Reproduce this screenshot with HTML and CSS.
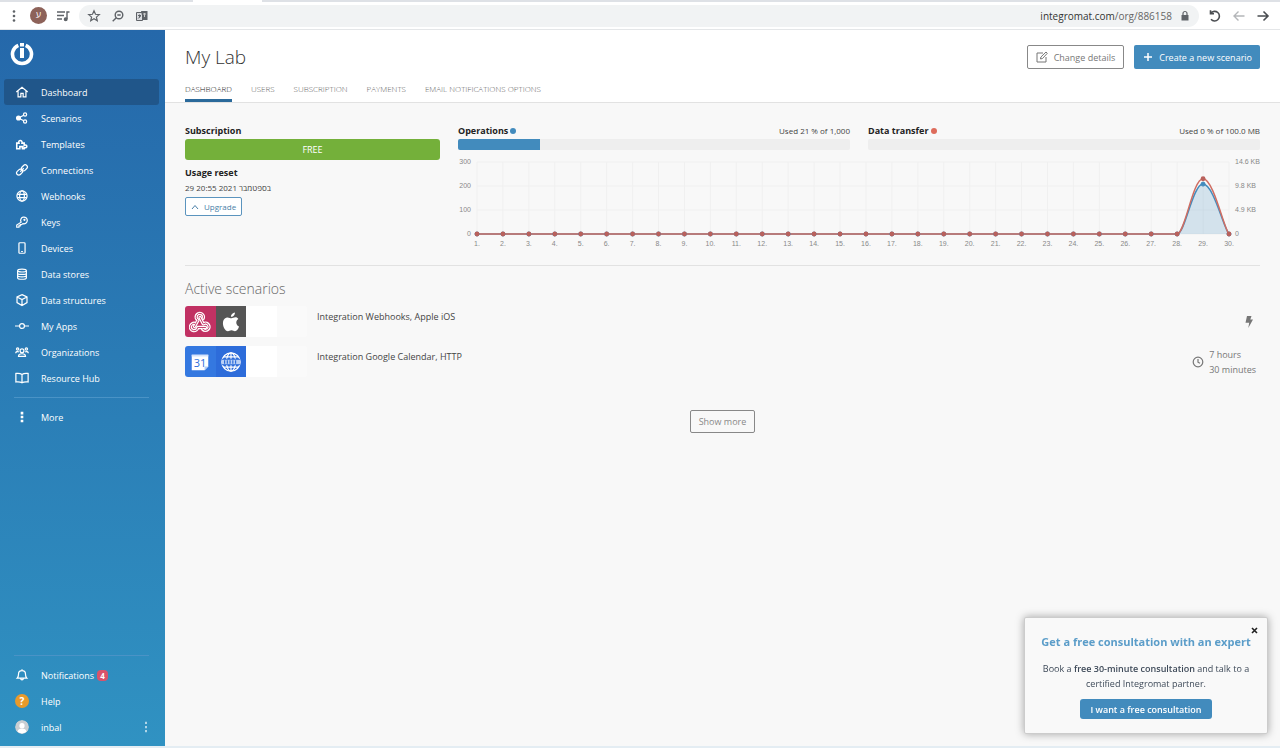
FILE: index.html
```
<!DOCTYPE html>
<html lang="en">
<head>
    <meta charset="UTF-8">
    <meta name="viewport" content="width=device-width, initial-scale=1.0">
    <title>My Lab</title>
    <link rel="stylesheet" href="styles.css">
</head>
<body>
    <div class="tabstrip"></div>
    <div class="toolbar">
        <button class="tool" aria-label="Menu"><svg width="16" height="16" viewBox="0 0 16 16" fill="#5f6368"><circle cx="8" cy="3.5" r="1.3"/><circle cx="8" cy="8" r="1.3"/><circle cx="8" cy="12.5" r="1.3"/></svg></button>
        <span class="profile">ע</span>
        <button class="tool" aria-label="Media"><svg width="16" height="16" viewBox="0 0 16 16" fill="none" stroke="#5f6368" stroke-width="1.4"><path d="M2 4h8M2 7.500h7M2 11h5M12 11V4h2.500"/><circle cx="10.700" cy="11.300" r="1.300" fill="#5f6368"/></svg></button>
        <div class="address">
            <button class="tool" aria-label="Bookmark"><svg width="16" height="16" viewBox="0 0 16 16" fill="none" stroke="#5f6368" stroke-width="1.2"><path d="M8 2.800l1.500 3.500 3.800.3-2.900 2.500.9 3.700L8 10.800l-3.300 2 .9-3.700-2.900-2.500 3.800-.3z"/></svg></button>
            <button class="tool" aria-label="Zoom"><svg width="16" height="16" viewBox="0 0 16 16" fill="none" stroke="#5f6368" stroke-width="1.4"><circle cx="9" cy="7" r="3.800"/><path d="M6.300 9.700L2.700 13.200M7.300 7h3.400"/></svg></button>
            <button class="tool" aria-label="Translate"><svg width="16" height="16" viewBox="0 0 16 16"><path d="M2.500 4.500h6v8h-6z" fill="#dadce0" stroke="#5f6368"/><path d="M7 3h6.500v9H9z" fill="#5f6368"/><path d="M4 7.500h3M5.500 6.500v3M4.200 10.500l2.500-2.500" stroke="#5f6368" fill="none"/><path d="M9 6h3M10.500 5v4" stroke="#ccc" fill="none"/></svg></button>
            <span class="url">integromat.com<span>/org/886158</span></span>
            <svg width="10" height="12" viewBox="0 0 10 12"><path d="M1.500 5h7v5.500h-7z" fill="#5f6368"/><path d="M3 5V3.500a2 2 0 0 1 4 0V5" fill="none" stroke="#5f6368" stroke-width="1.2"/></svg>
        </div>
        <button class="tool" aria-label="Reload"><svg width="16" height="16" viewBox="0 0 16 16" fill="none" stroke="#4a4d51" stroke-width="1.6"><path d="M3.800 5.200A4.800 4.800 0 1 1 4 11.300M3.500 2.200v3.500H7"/></svg></button>
        <button class="tool" aria-label="Forward"><svg width="16" height="16" viewBox="0 0 16 16" fill="none" stroke="#b4b6b9" stroke-width="1.400"><path d="M13.500 8H3M7.500 3.500L3 8l4.500 4.500"/></svg></button>
        <button class="tool" aria-label="Back"><svg width="16" height="16" viewBox="0 0 16 16" fill="none" stroke="#4a4d51" stroke-width="1.600"><path d="M2.500 8H13M8.500 3.500L13 8l-4.500 4.500"/></svg></button>
    </div>

    <div class="app">
        <nav class="sidebar">
            <a class="logo" href="#" aria-label="Home"><svg width="24" height="24" viewBox="0 0 24 24"><path d="M8.300 3.300A9.500 9.500 0 1 0 15.700 3.300" fill="none" stroke="#fff" stroke-width="3.600"/><path d="M10 1h4v3.500h-4zM10 6h4v10h-4z" fill="#fff"/></svg></a>
            <ul>
                <li><a class="active" href="#"><svg viewBox="0 0 16 16"><path d="M1.500 8L8 2.500 14.500 8M3.500 7v6.500h3.200V9.500h2.600v4h3.200V7"/></svg>Dashboard</a></li>
                <li><a href="#"><svg viewBox="0 0 16 16"><circle cx="4" cy="8" r="2.200" fill="#fff"/><circle cx="11.500" cy="4" r="1.800"/><circle cx="11.500" cy="12" r="1.800"/><path d="M5.500 7.200L10 4.800M5.500 8.800l4.500 2.400"/></svg>Scenarios</a></li>
                <li><a href="#"><svg viewBox="0 0 16 16"><path d="M2 13.500V7h2.500c-1.500-4 4.500-4 3.500 0h2.500v2.500c4-1.500 4 4 0 2.500v1.500H8.500v-2.500h-3v2.500z" stroke-width="1.800"/></svg>Templates</a></li>
                <li><a href="#"><svg viewBox="0 0 16 16"><rect x="7" y="3" width="7.500" height="5" rx="2.500" transform="rotate(-45 10.700 5.500)"/><rect x="1.500" y="8" width="7.500" height="5" rx="2.500" transform="rotate(-45 5.200 10.500)"/><path d="M6 10l4-4"/></svg>Connections</a></li>
                <li><a href="#"><svg viewBox="0 0 16 16"><circle cx="8" cy="8" r="5.800"/><ellipse cx="8" cy="8" rx="2.700" ry="5.800"/><path d="M2.500 6.200h11M2.500 9.800h11"/></svg>Webhooks</a></li>
                <li><a href="#"><svg viewBox="0 0 16 16"><path d="M7 8.200a3.800 3.800 0 1 1 2 1.600L7.500 11H6v1.500H4.500V14H2v-2.600z"/><circle cx="10.800" cy="5.500" r=".6"/></svg>Keys</a></li>
                <li><a href="#"><svg viewBox="0 0 16 16"><rect x="4.500" y="2" width="7" height="12" rx="1"/><path d="M7 12h2"/></svg>Devices</a></li>
                <li><a href="#"><svg viewBox="0 0 16 16"><path d="M3 4.200v8c0 2.400 10 2.400 10 0v-8M3 7c0 2 10 2 10 0M3 9.700c0 2 10 2 10 0"/><ellipse cx="8" cy="4" rx="5" ry="1.700"/></svg>Data stores</a></li>
                <li><a href="#"><svg viewBox="0 0 16 16"><path d="M8 1.800l5.700 2.700v6.500L8 14.200 2.300 11V4.500zM2.300 4.500L8 7.500l5.700-3M8 7.500v6.700"/></svg>Data structures</a></li>
                <li><a href="#"><svg viewBox="0 0 16 16"><circle cx="8" cy="8" r="2.800"/><path d="M0 8h5M11 8h5"/></svg>My Apps</a></li>
                <li><a href="#"><svg viewBox="0 0 16 16"><circle cx="8" cy="6.500" r="2.200"/><circle cx="3" cy="4.500" r="1.300"/><circle cx="13" cy="4.500" r="1.300"/><path d="M4 13c0-4 8-4 8 0zM.8 9.500C.8 7.500 3 7 4.500 8M15.200 9.500c0-2-2.200-2.500-3.700-1.500"/></svg>Organizations</a></li>
                <li><a href="#"><svg viewBox="0 0 16 16"><path d="M8 4C6.500 2.800 3.500 2.500 1 2.800v9.700c2.500-.3 5.500 0 7 1 1.500-1 4.500-1.300 7-1V2.800C12.500 2.500 9.500 2.800 8 4zv9.500"/></svg>Resource Hub</a></li>
            </ul>
            <hr>
            <ul>
                <li><a href="#"><svg viewBox="0 0 16 16"><path d="M8 2v3M8 6.500v3M8 11v3" stroke-width="3"/></svg>More</a></li>
            </ul>
            <div class="sidebar-bottom">
                <hr>
                <ul>
                    <li><a href="#"><svg viewBox="0 0 16 16"><path d="M2.500 11.500C4 10 4 9 4 7c0-5.300 8-5.300 8 0 0 2 0 3 1.500 4.500zM6.500 12c0 2 3 2 3 0M8 1.500V3"/></svg>Notifications <span class="count">4</span></a></li>
                    <li><a href="#"><span class="round help">?</span>Help</a></li>
                    <li><a href="#"><svg class="round" viewBox="0 0 16 16"><circle cx="8" cy="8" r="8" fill="#c9ced2" stroke="none"/><circle cx="8" cy="6.500" r="3" fill="#fff" stroke="none"/><path d="M3 13.500c0-5 10-5 10 0a8 8 0 0 1-10 0z" fill="#fff" stroke="none"/></svg>inbal<svg class="dots" viewBox="0 0 16 16"><path d="M8 2v2.500M8 6.800v2.500M8 11.500V14"/></svg></a></li>
                </ul>
            </div>
        </nav>

        <main>
            <header>
                <div class="title-row">
                    <h1>My Lab</h1>
                    <button class="btn btn-outline"><svg width="12" height="12" viewBox="0 0 12 12" fill="none" stroke="#777"><path d="M7 2H1v9h9V6M4.500 8l.4-2L10 1l1.300 1.300L6.500 7.500z"/></svg>Change details</button>
                    <button class="btn btn-primary"><svg width="10" height="10" viewBox="0 0 10 10" stroke="#fff" stroke-width="1.500"><path d="M5 1v8M1 5h8"/></svg>Create a new scenario</button>
                </div>
                <div class="tabs">
                    <a class="active" href="#">DASHBOARD</a>
                    <a href="#">USERS</a>
                    <a href="#">SUBSCRIPTION</a>
                    <a href="#">PAYMENTS</a>
                    <a href="#">EMAIL NOTIFICATIONS OPTIONS</a>
                </div>
            </header>

            <div class="content">
                <section class="overview">
                    <div class="plan">
                        <h3>Subscription</h3>
                        <div class="plan-name">FREE</div>
                        <h3>Usage reset</h3>
                        <p class="date">29 בספטמבר 2021 20:55</p>
                        <button class="upgrade"><svg width="8" height="6" viewBox="0 0 8 6" fill="none" stroke="#4a7fa8"><path d="M1 5l3-3.500L7 5"/></svg>Upgrade</button>
                    </div>
                    <div class="usage">
                        <div class="meters">
                            <div>
                                <div class="meter-head"><h3>Operations<i class="dot blue"></i></h3><span>Used 21 % of 1,000</span></div>
                                <div class="bar"><div style="width: 21%"></div></div>
                            </div>
                            <div>
                                <div class="meter-head"><h3>Data transfer<i class="dot red"></i></h3><span>Used 0 % of 100.0 MB</span></div>
                                <div class="bar"></div>
                            </div>
                        </div>
                        <svg id="chart" viewBox="0 0 802 92"></svg>
                    </div>
                </section>

                <section class="scenarios">
                    <h2>Active scenarios</h2>
                    <div class="scenario">
                        <div class="modules">
                            <span class="webhook"><svg viewBox="0 0 24 24" fill="none" stroke-linecap="round" stroke-linejoin="round"><g id="hook" stroke="#fff" stroke-width="3.600"><path d="M15.500 8A4 4 0 1 0 9.800 10L6 17"/><path d="M6.500 13.500A4 4 0 1 0 9.500 18H18"/><path d="M15 20A4 4 0 1 0 15.500 14L12 7"/></g><g stroke="#c13163" stroke-width="1"><path d="M15.500 8A4 4 0 1 0 9.800 10L6 17"/><path d="M6.500 13.500A4 4 0 1 0 9.500 18H18"/><path d="M15 20A4 4 0 1 0 15.500 14L12 7"/></g></svg></span>
                            <span class="apple"><svg viewBox="0 0 24 24" fill="#fff"><path d="M16.300 1.500c.2 2.500-1.900 5-4.400 4.800-.2-2.400 2-4.600 4.400-4.800zM20 8.600c-3.300 2-2.800 6.800.8 8.200-.7 2.300-2.500 5.200-4.500 5.200-1.400 0-2-.9-3.800-.9s-2.500.9-3.800.9C5.500 22 3.200 17 3.200 13.300c0-4 2.600-6.300 5.100-6.300 1.700 0 2.900 1 4.200 1 1.200 0 2.400-1.100 4.400-1.100 1.200 0 2.500.6 3.100 1.700z"/></svg></span>
                            <span class="empty"></span>
                            <span class="faded"></span>
                        </div>
                        <a class="name" href="#">Integration Webhooks, Apple iOS</a>
                        <svg class="bolt" width="8" height="12" viewBox="0 0 8 12" fill="#777"><path d="M2 0h4.500L5.300 3.500H8L3.300 12l.9-5.300H.5z"/></svg>
                    </div>
                    <div class="scenario">
                        <div class="modules">
                            <span class="calendar"><svg viewBox="0 0 24 24"><path d="M3 4h18v13l-4 4H3z" fill="#fff"/><path d="M17 21v-4h4z" fill="#b5cdf5"/><path d="M3 4h18v2H3z" fill="#d5e3fb"/><text x="12" y="17" text-anchor="middle">31</text></svg></span>
                            <span class="http"><svg viewBox="0 0 24 24" fill="none" stroke="#fff" stroke-width="1.300"><circle cx="12" cy="12" r="10"/><ellipse cx="12" cy="12" rx="5" ry="10"/><path d="M12 2v20M4 6.500h16M4 17.500h16"/><path d="M2 9h20v6H2z" fill="#b9d0f5" stroke="none"/><path d="M2 9h20M2 15h20M5 10v4M8 10v4M11 10v4M14 10v4M17 10v4" stroke="#2d6cda"/></svg></span>
                            <span class="empty"></span>
                            <span class="faded"></span>
                        </div>
                        <a class="name" href="#">Integration Google Calendar, HTTP</a>
                        <div class="interval">
                            <svg width="12" height="12" viewBox="0 0 12 12" fill="none" stroke="#777" stroke-width="1.200"><circle cx="6" cy="6" r="4.800"/><path d="M6 3v3.200l2 1"/></svg>
                            <span>7 hours<br>30 minutes</span>
                        </div>
                    </div>
                    <button class="show-more">Show more</button>
                </section>
            </div>
        </main>
    </div>

    <aside class="popup">
        <button class="close" aria-label="Close"><svg width="7" height="7" viewBox="0 0 7 7" stroke="#222" stroke-width="1.600"><path d="M1 1l5 5M6 1L1 6"/></svg></button>
        <h4>Get a free consultation with an expert</h4>
        <p>Book a <b>free 30-minute consultation</b> and talk to a<br>certified Integromat partner.</p>
        <button class="consult">I want a free consultation</button>
    </aside>

    <script>
        const operations = new Array(30).fill(0);
        const transfer = new Array(30).fill(0);
        operations[28] = 208;
        transfer[28] = 11.2;

        const left = 19, right = 771, top_ = 6, bottom = 78;
        const step = (right - left) / 29;

        function line(x1, y1, x2, y2) {
            return `<line class="grid" x1="${x1}" y1="${y1}" x2="${x2}" y2="${y2}"/>`;
        }

        function points(data, max) {
            return data.map((v, i) => [left + i * step, bottom - v / max * (bottom - top_)]);
        }

        function curve(pts) {
            let d = `M${pts[0][0]} ${pts[0][1]}`;
            for (let i = 1; i < pts.length; i++) {
                const [x0, y0] = pts[i - 1];
                const [x1, y1] = pts[i];
                // flat on the peak, steep at the foot
                const a = y0 < y1 ? [x0 + step * 0.4, y0] : [x0 + step * 0.3, y0];
                const b = y0 < y1 ? [x1 - step * 0.2, y1 - (y1 - y0) * 0.1] : [x1 - step * 0.4, y1];
                d += `C${a[0]} ${a[1]} ${b[0]} ${b[1]} ${x1} ${y1}`;
            }
            return d;
        }

        function drawChart() {
            let out = '';
            ['300', '200', '100', '0'].forEach((label, i) => {
                const y = top_ + i * 24;
                out += line(left, y, right, y);
                out += `<text x="13" y="${y + 2}" text-anchor="end">${label}</text>`;
            });
            ['14.6 KB', '9.8 KB', '4.9 KB', '0'].forEach((label, i) => {
                out += `<text x="777" y="${top_ + i * 24 + 2}">${label}</text>`;
            });
            const ops = points(operations, 300);
            const data = points(transfer, 14.6);
            ops.forEach(([x], i) => {
                out += line(x, top_, x, bottom);
                out += `<text x="${x}" y="90" text-anchor="middle">${i + 1}.</text>`;
            });
            out += `<path class="area" d="${curve(ops)}"/><path class="ops" d="${curve(ops)}"/>`;
            out += `<path class="data" d="${curve(data)}"/>`;
            ops.forEach(([x, y]) => out += `<circle class="ops-point" cx="${x}" cy="${y}" r="2"/>`);
            data.forEach(([x, y]) => out += `<circle class="data-point" cx="${x}" cy="${y}" r="2.4"/>`);
            document.getElementById('chart').innerHTML = out;
        }

        drawChart();
    </script>
</body>
</html>
```
FILE: styles.css
```
* {
    box-sizing: border-box;
}

body {
    margin: 0;
    min-height: 100vh;
    display: flex;
    flex-direction: column;
    font-family: "Open Sans", "Noto Sans", "DejaVu Sans", sans-serif;
    font-size: 9px;
    color: #444;
    background-color: #f8f8f8;
}

h1, h2, h3, h4, p, ul {
    margin: 0;
    padding: 0;
    font-weight: normal;
}

ul {
    list-style: none;
}

a {
    color: inherit;
    text-decoration: none;
}

button {
    padding: 0;
    border: none;
    background: none;
    font-family: inherit;
    font-size: 9px;
    cursor: pointer;
}

/* browser bar */
.tabstrip {
    height: 2px;
    background: linear-gradient(to right, #dee1e6 193px, #fff 193px, #fff 262px, #dee1e6 262px);
}

.toolbar {
    display: flex;
    align-items: center;
    gap: 8px;
    height: 28px;
    padding: 0 9px 0 6px;
    background-color: #fff;
    border-bottom: 1px solid #e4e6e8;
}

.tool {
    width: 16px;
    height: 16px;
}

.tool svg {
    display: block;
}

.profile {
    width: 17px;
    height: 17px;
    border-radius: 50%;
    background-color: #8d6259;
    color: #fff;
    font-size: 9px;
    line-height: 16px;
    text-align: center;
}

.address {
    flex: 1;
    display: flex;
    align-items: center;
    gap: 8px;
    height: 22px;
    padding: 0 9px 0 7px;
    border-radius: 11px;
    background-color: #f1f3f4;
}

.url {
    margin-left: auto;
    font-size: 10px;
    color: #333;
}

.url span {
    color: #666;
}

/* sidebar */
.app {
    flex: 1;
    display: flex;
    border-bottom: 2px solid #e4edf3;
}

.sidebar {
    width: 165px;
    display: flex;
    flex-direction: column;
    padding: 12px 6px 6px 4px;
    background: linear-gradient(#2568aa, #3092c2);
    color: #fff;
}

.logo {
    height: 24px;
    margin: 0 0 13px 6px;
}

.sidebar li a {
    display: flex;
    align-items: center;
    height: 26px;
    padding-left: 11px;
    border-radius: 3px;
}

.sidebar li a.active {
    background-color: #20568a;
}

.sidebar li svg {
    width: 14px;
    height: 14px;
    margin-right: 12px;
    fill: none;
    stroke: #fff;
    stroke-width: 1.4;
}

.sidebar hr {
    margin: 6px 10px;
    border: none;
    border-top: 1px solid #4a93c6;
}

.sidebar-bottom {
    margin-top: auto;
}

.sidebar li .round {
    width: 14px;
    height: 14px;
    border-radius: 50%;
}

.help {
    margin-right: 12px;
    background-color: #e89a2b;
    font-size: 10px;
    font-weight: bold;
    line-height: 14px;
    text-align: center;
}

.sidebar li .dots {
    margin: 0 6px 0 auto;
    stroke-width: 2;
    opacity: 0.7;
}

.count {
    width: 11px;
    height: 11px;
    margin-left: 3px;
    border-radius: 4px;
    background-color: #d9536b;
    font-size: 8px;
    font-weight: bold;
    line-height: 11px;
    text-align: center;
}

/* header */
main {
    flex: 1;
    min-width: 0;
}

header {
    padding: 14px 20px 0;
    background-color: #fff;
    border-bottom: 1px solid #e2e2e2;
}

.title-row {
    display: flex;
    align-items: center;
    gap: 10px;
    height: 26px;
}

h1 {
    flex: 1;
    font-size: 19px;
    font-weight: 300;
    color: #333;
}

.btn {
    display: flex;
    align-items: center;
    gap: 6px;
    height: 24px;
    padding: 0 8px;
    border-radius: 2px;
}

.btn-outline {
    border: 1px solid #888;
    color: #777;
}

.btn-primary {
    padding-left: 9px;
    background-color: #428bbd;
    color: #fff;
}

.tabs {
    display: flex;
    gap: 19px;
    margin-top: 12px;
}

.tabs a {
    height: 20px;
    padding-top: 1px;
    border-bottom: 3px solid transparent;
    font-size: 8px;
    font-weight: 300;
    line-height: 12px;
    color: #666;
}

.tabs a.active {
    border-color: #2b6a9b;
    color: #222;
}

/* overview */
.content {
    padding: 20px 20px 0;
}

.overview {
    display: flex;
    gap: 18px;
    padding-bottom: 17px;
    border-bottom: 1px solid #e2e2e2;
}

.plan {
    width: 255px;
}

h3 {
    font-size: 9px;
    font-weight: bold;
    line-height: 16px;
    color: #222;
}

.plan-name {
    height: 21px;
    margin-bottom: 5px;
    border-radius: 3px;
    background-color: #74b03a;
    color: #fff;
    line-height: 22px;
    text-align: center;
}

.date {
    font-size: 8px;
    line-height: 14px;
}

.upgrade {
    display: flex;
    align-items: center;
    gap: 5px;
    height: 19px;
    margin-top: 2px;
    padding: 0 5px;
    border: 1px solid #5b94be;
    border-radius: 2px;
    background-color: #fff;
    color: #4a7fa8;
    font-size: 8px;
}

.usage {
    flex: 1;
}

.meters {
    display: grid;
    grid-template-columns: 1fr 1fr;
    gap: 18px;
}

.meter-head {
    display: flex;
    justify-content: space-between;
    font-size: 8px;
    line-height: 16px;
}

.dot {
    display: inline-block;
    width: 6px;
    height: 6px;
    margin-left: 2px;
    border-radius: 50%;
}

.blue {
    background-color: #428bbd;
}

.red {
    background-color: #dd6b5b;
}

.bar {
    height: 11px;
    border-radius: 2px;
    background-color: #eee;
}

.bar div {
    height: 100%;
    border-radius: 2px 0 0 2px;
    background-color: #428bbd;
}

#chart {
    display: block;
    width: 100%;
    margin-top: 6px;
    overflow: visible;
    font-family: "Liberation Sans", Arial, sans-serif;
    font-size: 7px;
}

#chart text {
    fill: #888;
}

.grid {
    stroke: #f0f0f0;
}

.area {
    fill: #428bbd;
    fill-opacity: 0.2;
}

.ops, .data {
    fill: none;
    stroke-width: 1.5;
}

.ops, .ops-point {
    stroke: #428bbd;
}

.data {
    stroke: #cf6d62;
}

.ops-point {
    fill: #428bbd;
}

.data-point {
    fill: #b9615c;
}

/* scenarios */
.scenarios {
    display: flex;
    flex-direction: column;
    padding-top: 13px;
}

h2 {
    margin-bottom: 7px;
    font-size: 14px;
    font-weight: 300;
    line-height: 20px;
    color: #666;
}

.scenario {
    display: flex;
    height: 31px;
    margin-bottom: 9px;
}

.modules {
    display: flex;
    width: 122px;
    margin-right: 10px;
    border-radius: 3px;
    overflow: hidden;
}

.modules span {
    flex: 1;
    display: flex;
    align-items: center;
    justify-content: center;
}

.modules svg {
    width: 22px;
    height: 22px;
}

.modules text {
    font-size: 12px;
    fill: #2d6cda;
}

.webhook {
    background-color: #c13163;
}

.apple {
    background-color: #555;
}

.calendar {
    background-color: #3478e0;
}

.http {
    background-color: #2d6cda;
}

.empty {
    background-color: #fff;
}

.faded {
    background-color: #fafafa;
}

.name {
    flex: 1;
    line-height: 21px;
}

.bolt {
    align-self: center;
    margin-right: 7px;
}

.interval {
    display: flex;
    align-items: center;
    gap: 5px;
    padding-right: 4px;
    color: #777;
    line-height: 15px;
}

.show-more {
    align-self: center;
    height: 23px;
    margin-top: 24px;
    padding: 0 8px;
    border: 1px solid #888;
    border-radius: 2px;
    color: #888;
}

/* consultation popup */
.popup {
    position: fixed;
    right: 12px;
    bottom: 14px;
    width: 244px;
    padding: 15px 12px 14px;
    border: 1px solid #ccc;
    border-radius: 2px;
    background-color: #f9f9f9;
    box-shadow: 0 0 8px rgba(0, 0, 0, 0.35);
    color: #3e4a59;
    text-align: center;
}

.popup h4 {
    margin-bottom: 10px;
    font-size: 11px;
    font-weight: bold;
    line-height: 18px;
    color: #5b9dc9;
}

.popup p {
    margin-bottom: 8px;
    font-size: 9px;
    line-height: 15px;
}

.popup b {
    font-weight: 600;
}

.close {
    position: absolute;
    top: 8px;
    right: 8px;
    width: 8px;
    height: 8px;
}

.close svg {
    display: block;
}

.consult {
    height: 20px;
    padding: 0 10px;
    border-radius: 3px;
    background-color: #428bbd;
    color: #fff;
    font-size: 9px;
    font-weight: 600;
}
```
